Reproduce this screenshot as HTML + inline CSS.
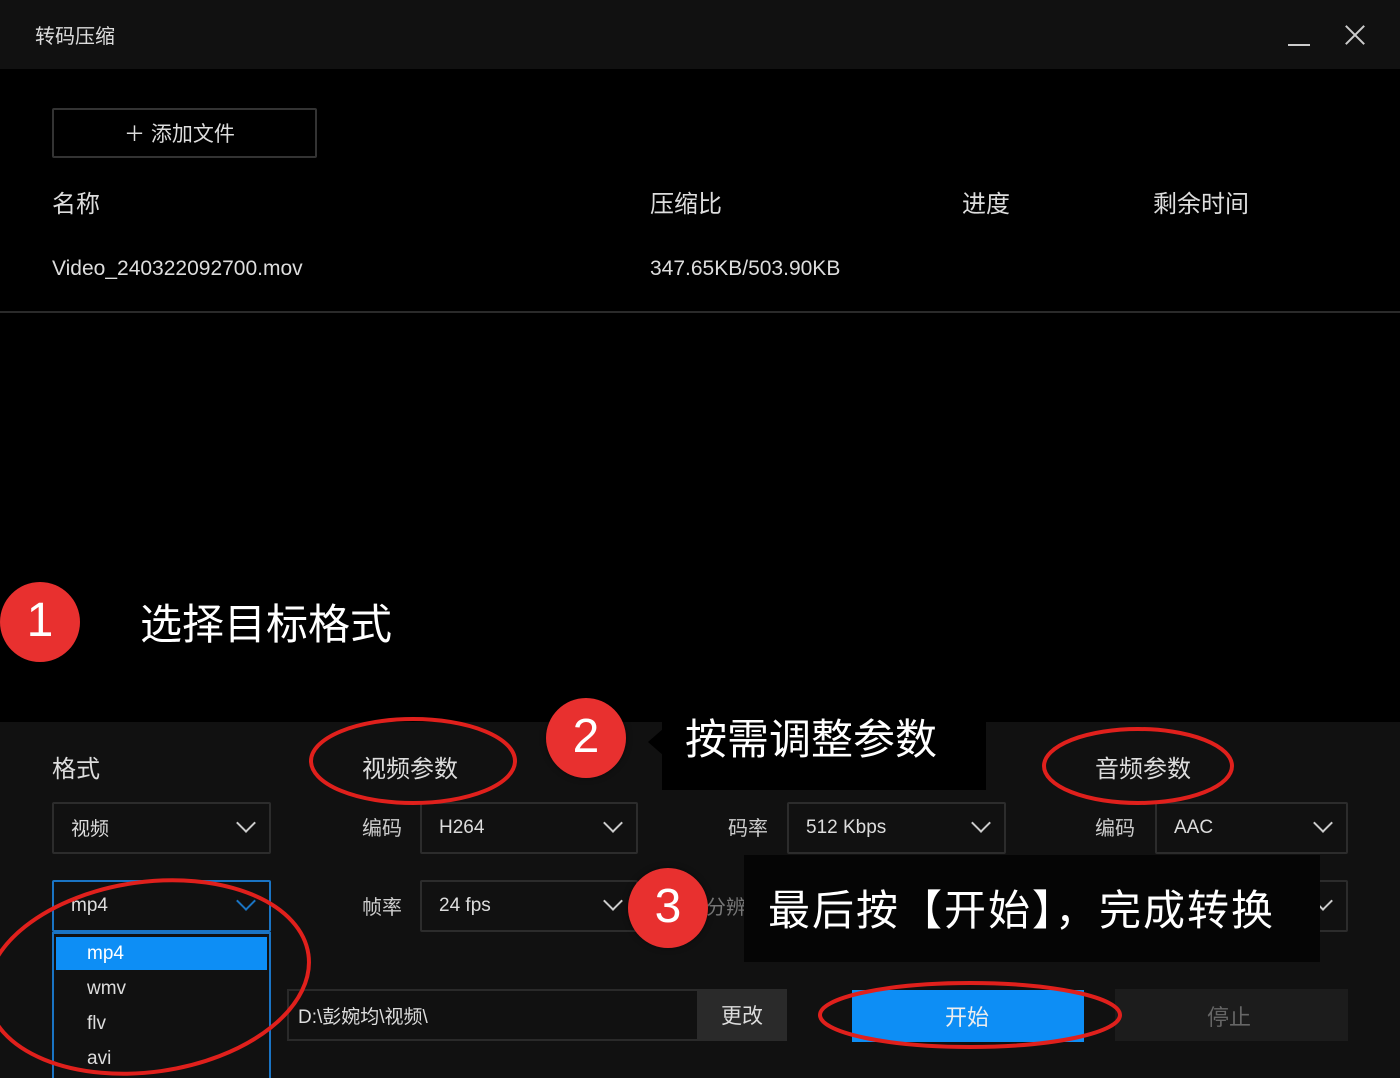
<!DOCTYPE html>
<html><head><meta charset="utf-8">
<style>
*{margin:0;padding:0;box-sizing:border-box}
body{width:1400px;height:1078px;background:#000;position:relative;overflow:hidden;font-family:"Liberation Sans","Noto Sans CJK SC",sans-serif;color:#ddd}
.a{position:absolute}
.t{font-size:22px;color:#ddd;white-space:nowrap}
.sel{position:absolute;height:52px;border:2px solid #2c2c2c;background:#111;border-radius:2px}
.sel span{position:absolute;left:17px;top:13px;font-size:19px;color:#ddd}
.chev{position:absolute;right:16px;top:12px;width:14px;height:14px;border-right:2px solid #ccc;border-bottom:2px solid #ccc;transform:rotate(45deg)}
.circ{position:absolute;width:80px;height:80px;border-radius:50%;background:#e8302f;color:#fff;font-size:48px;text-align:center;line-height:78px;box-shadow:0 0 6px rgba(0,0,0,.5)}
.big{font-size:42px;color:#fff;white-space:nowrap}
</style></head><body>
<div class="a" style="left:0;top:0;width:1400px;height:69px;background:#111"></div>
<div class="a t" style="left:35px;top:20px;font-size:20px">转码压缩</div>
<div class="a" style="left:1288px;top:44px;width:22px;height:2px;background:#ccc"></div>
<div class="a" style="left:1342px;top:34px;width:26px;height:2px;background:#ccc;transform:rotate(45deg)"></div>
<div class="a" style="left:1342px;top:34px;width:26px;height:2px;background:#ccc;transform:rotate(-45deg)"></div>

<div class="a" style="left:52px;top:108px;width:265px;height:50px;border:2px solid #333;border-radius:2px"></div>
<div class="a t" style="left:124px;top:118px;font-size:21px">＋ 添加文件</div>
<div class="a t" style="left:52px;top:184px;font-size:24px">名称</div>
<div class="a t" style="left:650px;top:184px;font-size:24px">压缩比</div>
<div class="a t" style="left:962px;top:184px;font-size:24px">进度</div>
<div class="a t" style="left:1153px;top:184px;font-size:24px">剩余时间</div>
<div class="a t" style="left:52px;top:257px;font-size:21px">Video_240322092700.mov</div>
<div class="a t" style="left:650px;top:257px;font-size:21px">347.65KB/503.90KB</div>
<div class="a" style="left:0;top:311px;width:1400px;height:2px;background:#2a2a2a"></div>

<div class="circ" style="left:0;top:582px">1</div>
<div class="a big" style="left:140px;top:591px">选择目标格式</div>

<div class="a" style="left:0;top:722px;width:1400px;height:356px;background:#111"></div>
<div class="a t" style="left:52px;top:749px;font-size:24px">格式</div>
<div class="a t" style="left:362px;top:749px;font-size:24px">视频参数</div>
<div class="a t" style="left:1095px;top:749px;font-size:24px">音频参数</div>

<div class="sel" style="left:52px;top:802px;width:219px"><span style="top:10px">视频</span><i class="chev"></i></div>
<div class="a t" style="left:362px;top:812px;font-size:20px;color:#ccc">编码</div>
<div class="sel" style="left:420px;top:802px;width:218px"><span>H264</span><i class="chev"></i></div>
<div class="a t" style="left:728px;top:812px;font-size:20px;color:#ccc">码率</div>
<div class="sel" style="left:787px;top:802px;width:219px"><span>512 Kbps</span><i class="chev"></i></div>
<div class="a t" style="left:1095px;top:812px;font-size:20px;color:#ccc">编码</div>
<div class="sel" style="left:1155px;top:802px;width:193px"><span>AAC</span><i class="chev"></i></div>

<div class="sel" style="left:52px;top:880px;width:219px;border-color:#1a74c4"><span>mp4</span><i class="chev" style="border-color:#1a74c4"></i></div>
<div class="a t" style="left:362px;top:891px;font-size:20px;color:#ccc">帧率</div>
<div class="sel" style="left:420px;top:880px;width:218px"><span>24 fps</span><i class="chev"></i></div>
<div class="sel" style="left:1155px;top:880px;width:193px"><i class="chev"></i></div>

<div class="a" style="left:52px;top:932px;width:219px;height:146px;background:#111;border:2px solid #1a74c4;border-bottom:none"></div>
<div class="a" style="left:56px;top:937px;width:211px;height:33px;background:#0d8ef5"></div>
<div class="a t" style="left:87px;top:943px;font-size:19px;color:#fff">mp4</div>
<div class="a t" style="left:87px;top:978px;font-size:19px">wmv</div>
<div class="a t" style="left:87px;top:1013px;font-size:19px">flv</div>
<div class="a t" style="left:87px;top:1048px;font-size:19px">avi</div>

<div class="a" style="left:287px;top:989px;width:412px;height:52px;border:2px solid #2a2a2a;background:#111"></div>
<div class="a t" style="left:298px;top:1002px;font-size:19px">D:\彭婉均\视频\</div>
<div class="a" style="left:698px;top:989px;width:89px;height:52px;background:#2a2a2a"></div>
<div class="a t" style="left:721px;top:1000px;font-size:21px">更改</div>
<div class="a" style="left:852px;top:990px;width:232px;height:52px;background:#0d8ef5"></div>
<div class="a t" style="left:945px;top:1000px;font-size:22px;color:#eee">开始</div>
<div class="a" style="left:1115px;top:989px;width:233px;height:52px;background:#1c1c1c"></div>
<div class="a t" style="left:1207px;top:1000px;font-size:22px;color:#666">停止</div>

<div class="a t" style="left:706px;top:891px;font-size:20px;color:#777">分辨率</div>
<div class="a" style="left:744px;top:855px;width:576px;height:107px;background:#050505"></div>
<div class="a big" style="left:768px;top:877px;letter-spacing:2px">最后按【开始】，完成转换</div>

<div class="a" style="left:662px;top:722px;width:324px;height:68px;background:#000"></div>
<div class="a" style="left:648px;top:728px;width:0;height:0;border-top:14px solid transparent;border-bottom:14px solid transparent;border-right:16px solid #000"></div>
<div class="a big" style="left:685px;top:706px">按需调整参数</div>
<div class="circ" style="left:546px;top:698px">2</div>
<div class="circ" style="left:628px;top:868px">3</div>

<svg class="a" style="left:0;top:0" width="1400" height="1078">
<g fill="none" stroke="#e0201c" stroke-width="4">
<ellipse cx="413" cy="761" rx="102" ry="42"/>
<ellipse cx="1138" cy="766" rx="94" ry="37"/>
<ellipse cx="970" cy="1015" rx="150" ry="32"/>
<ellipse cx="148" cy="977" rx="162" ry="95" transform="rotate(-8 148 977)"/>
</g></svg>
</body></html>
